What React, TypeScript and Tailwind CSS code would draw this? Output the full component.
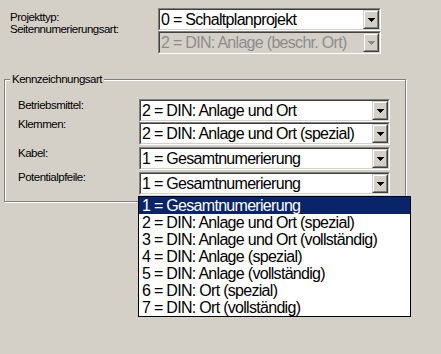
import clsx from "clsx";

const Arrow = ({ disabled }: { disabled?: boolean }) => (
  <svg width="7" height="4" shapeRendering="crispEdges">
    <g fill={disabled ? "#8c8c8c" : "#000"}>
      <rect x="0" y="0" width="7" height="1" />
      <rect x="1" y="1" width="5" height="1" />
      <rect x="2" y="2" width="3" height="1" />
      <rect x="3" y="3" width="1" height="1" />
    </g>
  </svg>
);

function Combo({ value, disabled, className }: { value: string; disabled?: boolean; className?: string }) {
  return (
    <div className={clsx("flex h-[23px] border border-t-[#808080] border-l-[#808080] border-b-white border-r-white", className)}>
      <div
        className={clsx(
          "flex flex-1 min-w-0 border border-t-[#404040] border-l-[#404040] border-b-[#d4d0c8] border-r-[#d4d0c8]",
          disabled ? "bg-[#d4d0c8]" : "bg-white"
        )}
      >
        <span
          className={clsx(
            "flex-1 pl-[1px] text-[16px] leading-[19px] tracking-[-0.7px] whitespace-nowrap overflow-hidden",
            disabled ? "text-[#8c8c8c]" : "text-black"
          )}
        >
          {value}
        </span>
        {/* drop button */}
        <div className="w-[16px] border border-t-[#d4d0c8] border-l-[#d4d0c8] border-b-[#404040] border-r-[#404040]">
          <div className="flex h-full items-center justify-center border border-t-white border-l-white border-b-[#808080] border-r-[#808080] bg-[#d4d0c8]">
            <Arrow disabled={disabled} />
          </div>
        </div>
      </div>
    </div>
  );
}

const options = [
  "1 = Gesamtnumerierung",
  "2 = DIN: Anlage und Ort (spezial)",
  "3 = DIN: Anlage und Ort (vollständig)",
  "4 = DIN: Anlage (spezial)",
  "5 = DIN: Anlage (vollständig)",
  "6 = DIN: Ort (spezial)",
  "7 = DIN: Ort (vollständig)",
];

export default function App() {
  return (
    <div className="relative w-[441px] h-[354px] overflow-hidden bg-[#d4d0c8] text-black font-['Liberation_Sans',Arial,sans-serif]">
      {/* Project settings */}
      <div className="flex pt-[8px]">
        <div className="flex w-[158px] flex-col pl-[10px] pt-[3px] text-[11.5px] leading-[12px] tracking-[-0.5px]">
          <span>Projekttyp:</span>
          <span>Seitennumerierungsart:</span>
        </div>
        <div className="flex w-[223px] flex-col">
          <Combo value="0 = Schaltplanprojekt" />
          <Combo value="2 = DIN: Anlage (beschr. Ort)" disabled />
        </div>
      </div>

      {/* Kennzeichnungsart group */}
      <fieldset className="mt-[18px] ml-[4px] h-[130px] w-[402px] border border-[#808080] shadow-[inset_1px_1px_0_#fff,1px_1px_0_#fff]">
        <legend className="ml-[5px] bg-[#d4d0c8] px-[2px] text-[11.5px] leading-[14px] tracking-[-0.5px]">
          Kennzeichnungsart
        </legend>
        <div className="flex">
          <div className="flex w-[134px] flex-col pl-[13px] pt-[12px] text-[11.5px] leading-[14px] tracking-[-0.5px]">
            <span>Betriebsmittel:</span>
            <span className="mt-[5px]">Klemmen:</span>
            <span className="mt-[15px]">Kabel:</span>
            <span className="mt-[10px]">Potentialpfeile:</span>
          </div>
          <div className="flex w-[251px] flex-col pt-[13px]">
            <Combo value="2 = DIN: Anlage und Ort" />
            <Combo value="2 = DIN: Anlage und Ort (spezial)" />
            <Combo value="1 = Gesamtnumerierung" className="mt-[2px]" />
            <Combo value="1 = Gesamtnumerierung" className="mt-[2px]" />
          </div>
        </div>
      </fieldset>

      {/* open dropdown list */}
      <ul className="absolute left-[138px] top-[196px] w-[273px] border border-black bg-white">
        {options.map((o, i) => (
          <li
            key={o}
            className={clsx(
              "h-[17px] pl-[3px] text-[16px] leading-[17px] tracking-[-0.7px] whitespace-nowrap",
              i === 0 ? "bg-[#0a246a] text-white" : "text-black"
            )}
          >
            {o}
          </li>
        ))}
      </ul>
    </div>
  );
}
